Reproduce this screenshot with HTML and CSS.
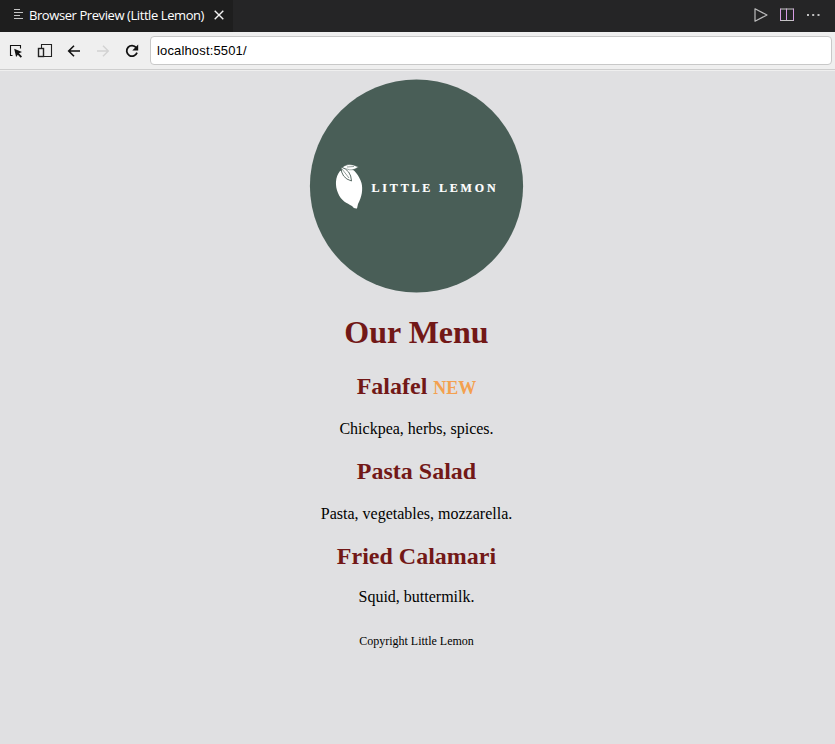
FILE: index.html
```html
<!DOCTYPE html>
<html lang="en">
<head>
<meta charset="utf-8">
<title>Browser Preview (Little Lemon)</title>
<link rel="stylesheet" href="styles.css">
</head>
<body>
<header class="tabs">
  <div class="tab">
    <svg class="tab-icon" width="10" height="10" viewBox="0 0 10 10" stroke="#c4c4c4" stroke-width="1.2" fill="none"><path d="M0 .5H6M0 3.5H9M0 6.5H6M0 9.5H9"/></svg>
    <span class="tab-title">Browser Preview (Little Lemon)</span>
    <svg class="close" width="10" height="10" viewBox="0 0 10 10" stroke="#f2f2f2" stroke-width="1.4"><path d="M.7.7 9.3 9.3M9.3.7.7 9.3"/></svg>
  </div>
  <div class="actions">
    <svg width="14" height="14" viewBox="0 0 14 14" fill="none" stroke="#bcbcbc" stroke-width="1.2" stroke-linejoin="round"><path d="M1 .8V13.2L13 7Z"/></svg>
    <svg width="14" height="14" viewBox="0 0 14 14" fill="none" stroke="#d79be4"><path d="M.5 .5V13M6.5 .5V13M13.5 .5V13"/><path d="M.5 1H13.5M.5 12.5H13.5" stroke="#c5c5c5"/></svg>
    <svg width="14" height="14" viewBox="0 0 14 14" fill="#c0c0c0"><path d="M0 6h2v2h-2zM5.2 6h2v2h-2zM10.5 6h2v2h-2z"/></svg>
  </div>
</header>
<nav class="toolbar">
  <div class="tools">
    <svg width="16" height="16" viewBox="0 0 16 16"><path d="M4.5 12.5H2.5V2.5H12.5V5.5" fill="none" stroke="#111" stroke-width="1.1"/><path d="M6.2 5.8 14 9.1 11 10.3 14 13.5 12.7 14.7 9.8 11.7 8.1 14Z" fill="#111"/></svg>
    <svg width="16" height="16" viewBox="0 0 16 16" fill="none" stroke="#222" stroke-width="1.1"><path d="M4.5 5V1.5H14.5V13.5H7"/><rect x="1.5" y="5.5" width="5" height="8" stroke-width="1.4"/></svg>
    <svg width="16" height="16" viewBox="0 0 16 16" fill="none" stroke="#111" stroke-width="1.6"><path d="M14 8H3M8 2.7 2.7 8 8 13.3"/></svg>
    <svg width="16" height="16" viewBox="0 0 16 16" fill="none" stroke="#d2d2d2" stroke-width="1.4"><path d="M2 8H13M8 2.7 13.3 8 8 13.3"/></svg>
    <svg width="16" height="16" viewBox="0 0 16 16"><path d="M12.2 4.6A5.3 5.3 0 1 0 13 9.6" fill="none" stroke="#111" stroke-width="1.8"/><path d="M14.2 1.5V7.4H8.3Z" fill="#111"/></svg>
  </div>
  <div class="address">localhost:5501/</div>
</nav>
<main class="page">
  <svg class="logo" width="215" height="214" viewBox="0 0 215 214" role="img" aria-label="Little Lemon">
    <circle cx="107.5" cy="107" r="106.6" fill="#495e57"/>
    <path d="M31 92C26 98 26 107 29 114C32 122 38 124 43 127Q45 130 48 129.500L49 125C53 118 54 110 52.500 104C50 96 45 90 40 89Z" fill="#fff"/>
    <path d="M32 90Q38 82 49.500 88Q43 92.500 38 90Z" fill="#fff" stroke="#495e57" stroke-width=".5"/>
    <path d="M32 88Q42 91 42.500 102Q32 99 32 88Z" fill="#fff" stroke="#495e57" stroke-width=".9"/>
    <path d="M33 90 40 99M38 88 45 87.500" stroke="#495e57" stroke-width=".6" fill="none"/>
    <text class="wordmark" x="62.5" y="113">LITTLE LEMON</text>
  </svg>
  <h1>Our Menu</h1>
  <h2 class="first">Falafel <span class="new">NEW</span></h2>
  <p>Chickpea, herbs, spices.</p>
  <h2>Pasta Salad</h2>
  <p>Pasta, vegetables, mozzarella.</p>
  <h2>Fried Calamari</h2>
  <p class="last">Squid, buttermilk.</p>
  <footer>Copyright Little Lemon</footer>
</main>
</body>
</html>
```
FILE: styles.css
```css
* { box-sizing: border-box; }
body { margin: 0; height: 744px; overflow: hidden; display: flex; flex-direction: column; background: #e0e0e2; }
svg { display: block; flex: none; }
.tabs { height: 32px; flex: none; display: flex; justify-content: space-between; background: #252526; }
.tab { width: 233px; display: flex; align-items: center; padding: 0 9px 2px 14px; background: #1e1e1e; color: #fff; font: 13px/18px "Open Sans", sans-serif; }
.tab-title { width: 176px; margin-left: 5px; white-space: nowrap; letter-spacing: -.42px; }
.close { margin-left: 9px; }
.tab-icon { margin-top: -2px; }
.actions { display: flex; align-items: center; gap: 13px; padding: 0 14px 2px 0; }
.actions svg:first-child { margin-right: -1px; }
.toolbar { height: 39px; flex: none; display: flex; align-items: center; padding: 0 3px 2px 8px; background: #efefef; border-bottom: 1px solid #efefef; box-shadow: inset 0 -1px #cecece; }
.tools { display: flex; gap: 13px; padding-top: 2px; }
.address { flex: 1; height: 29px; margin-left: 10px; padding: 0 6px; border: 1px solid #c8c8c8; border-radius: 4px; background: #fff; color: #000; font: 13px/28px "Liberation Sans", Arial, sans-serif; letter-spacing: .15px; }
.page { flex: 1; padding: 8px 2px 0 0; text-align: center; font: 16px/18px "Liberation Serif", "Times New Roman", serif; color: #000; }
.logo { margin: 0 auto; }
.wordmark { font: bold 12px "Liberation Serif", serif; letter-spacing: 2.82px; fill: #fff; stroke: #fff; stroke-width: .2px; }
h1 { margin: 21px 0; font-size: 32px; line-height: 37px; color: #721817; }
h2 { margin: 20px 0; font-size: 24px; line-height: 27px; color: #721817; }
.first { margin: 22px 0 18px; }
.new { font-size: 18px; color: #f4a04f; }
p { margin: 16px 0; }
.last { margin-top: -2px; }
footer { margin-top: 28px; font-size: 12px; line-height: 14px; }
```
